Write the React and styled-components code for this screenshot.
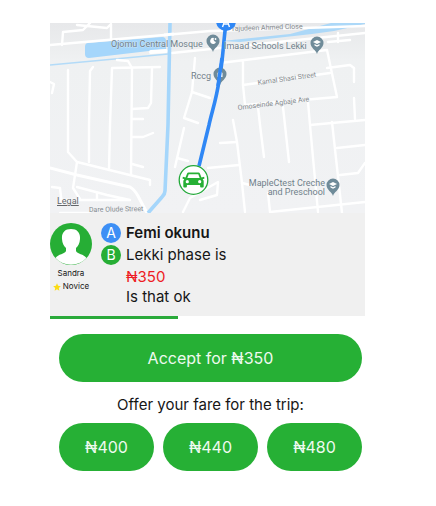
import React from 'react';
import styled, { createGlobalStyle } from 'styled-components';

const ROADS = [
    '0,22 160,8 315,3',
    '12,22 13,9 33,7 40,0',
    '27,2 57,5 61,1 61,16',
    '18,47 18,129 27,139 100,157 100,162',
    '43,44 40,48 39,102 39,139',
    '110,44 62,45 60,102 59,147',
    '67,37 78,38 82,45 81,152',
    '102,45 101,80 98,85 82,86',
    '82,96 93,96',
    '82,114 93,114 103,110',
    '82,141 93,144',
    '0,59 4,61 2,70',
    '145,35 142,69 134,95 148,100',
    '142,69 160,75',
    '134,105 125,144',
    '127,135 138,138',
    '27,139 23,165 30,176',
    '2,164 10,165 12,182',
    '27,164 57,172 80,177 12,177',
    '47,170 47,177',
    '10,190 40,190',
    '133,189 140,175 168,159 167,172 150,177',
    '122,30 315,10',
    '170,40 277,27 287,74 195,82 193,62 193,39',
    '193,62 280,50',
    '277,45 300,42 304,45 304,59',
    '278,19 300,17',
    '288,10 288,19',
    '208,84 210,102 214,134',
    '233,84 239,139',
    '258,79 260,102 268,189',
    '260,102 315,97',
    '304,75 305,96',
    '282,99 292,190',
    '287,125 315,122',
    '290,152 308,150 315,140',
    '183,97 187,119 192,160 195,189',
    '170,120 187,119',
    '158,145 189,142',
    '192,160 200,162',
    '218,170 220,189 315,179',
];

function Pin({ x, y, children }) {
    return (
        <g transform={`translate(${x} ${y})`}>
            <path d="M0 11 C-1 7 -6.5 5 -6.5 0 A6.5 6.5 0 0 1 6.5 0 C6.5 5 1 7 0 11Z" fill="#6f8b99" />
            {children}
        </g>
    );
}

function TripMap() {
    return (
        <MapBlock>
            <MapDrawing viewBox="0 0 315 190" role="img" aria-label="Trip map">
                <defs>
                    <linearGradient id="land" x1="0" y1="0" x2="0" y2="1">
                        <stop offset="0" stopColor="#e7e8ea" />
                        <stop offset="0.2" stopColor="#eff1f2" />
                        <stop offset="1" stopColor="#f1f2f4" />
                    </linearGradient>
                </defs>
                <rect width="315" height="190" fill="url(#land)" />
                <path d="M38 20 L112 14 Q116 14 116 18 V26 L39 35 Q35 35 35 31 V24 Q35 20 38 20Z" fill="#a5d6fb" />
                <path d="M172 18 L240 11 L281 0 H315 V1 L284 8 L262 11 L190 19Z" fill="#acd8f8" />
                <path d="M0 42 L118 31" stroke="#b3dbf8" strokeWidth="1.5" />
                <g fill="none" stroke="#fff" strokeWidth="2.4" strokeLinejoin="round" strokeLinecap="round">
                    {ROADS.map((points) => <polyline key={points} points={points} />)}
                    <path d="M0 145 L27 152 L80 164 Q84 166 88 173 L97 190" strokeWidth="3" />
                    <path d="M101 29 L116 28" strokeWidth="4" />
                </g>
                <path d="M120 0 L118 102 L115 168 Q115 171 112 174 L98 190" fill="none" stroke="#a5d6fb" strokeWidth="3.6" />
                <path d="M114 12 L124 11" stroke="#fff" strokeWidth="3" />
                <path d="M176 0 C173 22 173 38 169 58 C166 78 162 88 159 102 L149 143" fill="none" stroke="#2f87f5" strokeWidth="3.6" />
                <MapLabel x="61" y="24">Ojomu Central Mosque</MapLabel>
                <MapLabel x="174" y="26">Imaad Schools Lekki</MapLabel>
                <MapLabel x="141" y="56">Rccg</MapLabel>
                <MapLabel x="275" y="163" textAnchor="end">MapleCtest Creche</MapLabel>
                <MapLabel x="275" y="172" textAnchor="end">and Preschool</MapLabel>
                <StreetLabel transform="translate(181 8) rotate(-2)">Tajudeen Ahmed Close</StreetLabel>
                <StreetLabel transform="translate(208 62) rotate(-8)">Kamal Shasi Street</StreetLabel>
                <StreetLabel transform="translate(188 87) rotate(-7)">Omoseinde Agbaje Ave</StreetLabel>
                <StreetLabel transform="translate(39 189) rotate(-1)">Dare Olude Street</StreetLabel>
                <Pin x={163} y={18}>
                    <path d="M1 -3 A3 3 0 1 0 3 1 A2.6 2.6 0 0 1 1 -3Z" fill="#fff" />
                    <circle cx="2.5" cy="-2" r="0.9" fill="#fff" />
                </Pin>
                <Pin x={267} y={20}>
                    <path d="M-4 -1 L0 -3 L4 -1 L0 1Z M-2.5 1 L0 2.2 L2.5 1 V2.5 L0 3.8 L-2.5 2.5Z" fill="#fff" />
                </Pin>
                <Pin x={170} y={51}>
                    <path d="M-2.5 3 V-1 L0 -3.5 L2.5 -1 V3 H0.8 V1 H-0.8 V3Z" fill="#fff" />
                </Pin>
                <path d="M172 35 L168 63" stroke="#2f87f5" strokeWidth="3.6" />
                <Pin x={283} y={162}>
                    <path d="M-4 -1 L0 -3 L4 -1 L0 1Z M-2.5 1 L0 2.2 L2.5 1 V2.5 L0 3.8 L-2.5 2.5Z" fill="#fff" />
                </Pin>
                <circle cx="176" cy="-2" r="10" fill="#2f87f5" />
                <path d="M172.5 4 L174 0 M179.5 4 L178 0 M173.5 1 H178.5" stroke="#fff" strokeWidth="1.4" fill="none" />
                <circle cx="143.5" cy="157" r="14.3" fill="#fff" stroke="#23a93a" strokeWidth="1.3" />
                <g transform="translate(143.5 157)">
                    <path
                        d="M-6.4 -6.5 Q-6 -7.4 -5 -7.4 H5 Q6 -7.4 6.4 -6.5 L8 -2.4 L10.6 -3.2 L11 -1.6 L9.2 -0.8 Q10.2 0.2 10.2 1.6 V6.6 Q10.2 7.6 9.2 7.6 H7.6 Q6.6 7.6 6.6 6.6 V5 H-6.6 V6.6 Q-6.6 7.6 -7.6 7.6 H-9.2 Q-10.2 7.6 -10.2 6.6 V1.6 Q-10.2 0.2 -9.2 -0.8 L-11 -1.6 L-10.6 -3.2 L-8 -2.4Z"
                        fill="#26b035"
                    />
                    <path d="M-4.8 -5.8 H4.8 L6.2 -2 H-6.2Z" fill="#fff" />
                    <circle cx="-6.2" cy="1.7" r="1.6" fill="#fff" />
                    <circle cx="6.2" cy="1.7" r="1.6" fill="#fff" />
                </g>
            </MapDrawing>
            <LegalLink href="#">Legal</LegalLink>
        </MapBlock>
    );
}

function Avatar() {
    return (
        <AvatarDrawing viewBox="0 0 42 42" aria-hidden="true">
            <circle cx="21" cy="21" r="21" fill="#26ae35" />
            <path
                d="M21 6 C27.5 6 30.5 10 30 16 C29.8 20 28 23.5 26 25 V28 C27 31 34 31 36.5 35 A21 21 0 0 1 5.5 35 C8 31 15 31 16 28 V25 C14 23.5 12.2 20 12 16 C11.5 10 14.5 6 21 6Z"
                fill="#fff"
            />
        </AvatarDrawing>
    );
}

function App() {
    return (
        <>
            <GlobalStyle />
            <Screen>
                <TripMap />
                <OfferBlock>
                    <Profile>
                        <Avatar />
                        <ProfileText>Sandra</ProfileText>
                        <ProfileText>
                            <Star viewBox="0 0 24 24" aria-hidden="true">
                                <path d="M12 1 L15.4 8.6 L23.5 9.5 L17.4 15 L19.1 23 L12 18.9 L4.9 23 L6.6 15 L0.5 9.5 L8.6 8.6Z" fill="#fbdc14" />
                            </Star>
                            Novice
                        </ProfileText>
                    </Profile>
                    <Route>
                        <Badge $color="#3d8ff5">A</Badge>
                        <Stop $bold>Femi okunu</Stop>
                        <Badge $color="#26ae35">B</Badge>
                        <Stop>Lekki phase is</Stop>
                        <Price>₦350</Price>
                        <Note>Is that ok</Note>
                    </Route>
                </OfferBlock>
                <TimeLeft value="128" max="315" aria-label="Time left" />
                <Actions>
                    <PillButton type="button">Accept for ₦350</PillButton>
                    <Hint>Offer your fare for the trip:</Hint>
                    <FareRow>
                        <PillButton type="button">₦400</PillButton>
                        <PillButton type="button">₦440</PillButton>
                        <PillButton type="button">₦480</PillButton>
                    </FareRow>
                </Actions>
            </Screen>
        </>
    );
}

const GlobalStyle = createGlobalStyle`
    * {
        box-sizing: border-box;
    }

    body {
        margin: 0;
        background-color: #fff;
        color: #161616;
        font-family: Inter, "Liberation Sans", sans-serif;
    }
`;

const Screen = styled.main`
    display: flex;
    flex-direction: column;

    padding: 23px 71px 32px 50px;
`;

const MapBlock = styled.section`
    position: relative;
`;

const MapDrawing = styled.svg`
    display: block;
    width: 100%;
    height: auto;
`;

const MapLabel = styled.text`
    fill: #70808a;
    stroke: #f3f5f6;
    stroke-width: 1px;
    stroke-opacity: 0.5;
    paint-order: stroke;

    font-family: Roboto, sans-serif;
    font-size: 9px;
`;

const StreetLabel = styled(MapLabel)`
    fill: #858a8f;
    font-size: 7px;
`;

const LegalLink = styled.a`
    position: absolute;
    left: 7px;
    bottom: 6px;

    color: #63666a;

    font-family: Roboto, sans-serif;
    font-size: 9px;
    line-height: 12px;
`;

const OfferBlock = styled.section`
    display: flex;
    gap: 9px;

    padding: 10px 0 9px;

    background-color: #f0f0f0;
`;

const Profile = styled.div`
    display: flex;
    flex-direction: column;
    align-items: center;

    width: 42px;
`;

const AvatarDrawing = styled.svg`
    width: 42px;
    height: 42px;
    margin-bottom: 2px;
`;

const ProfileText = styled.div`
    display: flex;
    align-items: center;
    gap: 2px;

    font-size: 8px;
    line-height: 13px;
`;

const Star = styled.svg`
    width: 8px;
    height: 8px;
`;

const Route = styled.div`
    flex: 1;
    display: grid;
    grid-template-columns: 20px 1fr;
    grid-template-rows: 20px 24px 20px 20px;
    align-items: center;
    column-gap: 5px;
`;

const Badge = styled.span`
    height: 20px;
    border-radius: 50%;

    background-color: ${({ $color }) => $color};
    color: #fff;

    font-size: 14px;
    line-height: 20px;
    text-align: center;
`;

const Stop = styled.span`
    font-size: 15px;
    font-weight: ${({ $bold }) => ($bold ? 600 : 400)};
    line-height: 20px;
`;

const Price = styled(Stop)`
    grid-column: 2;
    color: #ee1c24;
`;

const Note = styled(Stop)`
    grid-column: 2;
`;

const TimeLeft = styled.progress`
    appearance: none;
    display: block;
    width: 100%;
    height: 3px;
    border: 0;

    &::-webkit-progress-bar {
        background-color: #fff;
    }

    &::-webkit-progress-value {
        background-color: #2aaa3a;
    }
`;

const Actions = styled.section`
    display: flex;
    flex-direction: column;

    padding: 15px 3px 0 9px;
`;

const PillButton = styled.button`
    flex: 1;
    height: 48px;
    min-height: 48px;
    padding: 0;
    border: 0;
    border-radius: 24px;

    background-color: #26b035;
    color: #eefaef;

    font-family: inherit;
    font-size: 16px;
`;

const Hint = styled.p`
    margin: 13px 0 8px;

    font-size: 15px;
    line-height: 20px;
    text-align: center;
`;

const FareRow = styled.div`
    display: flex;
    gap: 9px;
`;

export default App;
